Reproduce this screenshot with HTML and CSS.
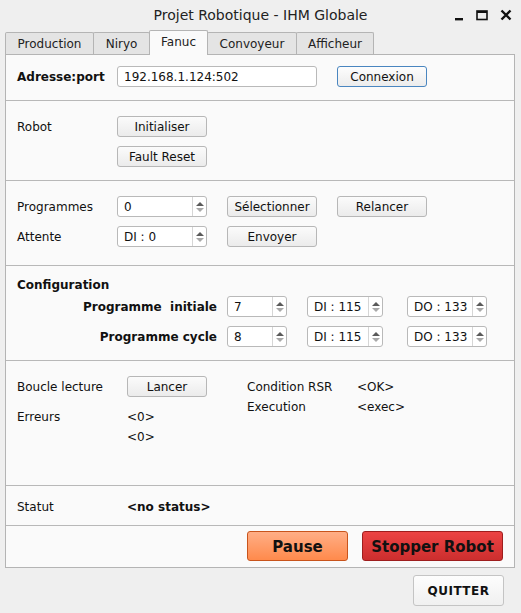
FILE: index.html
```html
<!DOCTYPE html>
<html lang="fr">
<head>
<meta charset="utf-8">
<title>Projet Robotique - IHM Globale</title>
<link rel="stylesheet" href="styles.css">
</head>
<body>
<div class="window">
  <div class="titlebar">
    <span class="title">Projet Robotique - IHM Globale</span>
    <div class="wm">
      <svg class="wm-min" width="10" height="10" viewBox="0 0 10 10"><rect x="1" y="7" width="8" height="2.4" fill="#111"/></svg>
      <svg class="wm-max" width="12" height="12" viewBox="0 0 12 12"><rect x="1" y="2" width="10" height="8.5" fill="none" stroke="#111" stroke-width="1.6"/><rect x="1" y="2" width="10" height="2" fill="#111"/></svg>
      <svg class="wm-close" width="12" height="12" viewBox="0 0 12 12"><path d="M1.5 1.5 L10.5 10.5 M10.5 1.5 L1.5 10.5" stroke="#111" stroke-width="2.4"/></svg>
    </div>
  </div>

  <div class="tabs">
    <div class="tab tab-production">Production</div>
    <div class="tab tab-niryo">Niryo</div>
    <div class="tab tab-fanuc active">Fanuc</div>
    <div class="tab tab-convoyeur">Convoyeur</div>
    <div class="tab tab-afficheur">Afficheur</div>
  </div>

  <div class="panel">
    <section class="sec sec-addr">
      <div class="row">
        <span class="label bold">Adresse:port</span>
        <div class="input w200">192.168.1.124:502</div>
        <button class="btn default w90">Connexion</button>
      </div>
    </section>

    <section class="sec sec-robot">
      <div class="row">
        <span class="label">Robot</span>
        <button class="btn w90">Initialiser</button>
      </div>
      <div class="row">
        <span class="label"></span>
        <button class="btn w90">Fault Reset</button>
      </div>
    </section>

    <section class="sec sec-prog">
      <div class="row">
        <span class="label">Programmes</span>
        <div class="spin w90"><span class="val">0</span><span class="arrows"><i class="up"></i><i class="down"></i></span></div>
        <button class="btn w90">Sélectionner</button>
        <button class="btn w90">Relancer</button>
      </div>
      <div class="row">
        <span class="label">Attente</span>
        <div class="spin w90"><span class="val">DI : 0</span><span class="arrows"><i class="up"></i><i class="down"></i></span></div>
        <button class="btn w90">Envoyer</button>
      </div>
    </section>

    <section class="sec sec-config">
      <div class="config-title bold">Configuration</div>
      <div class="crow">
        <span class="clabel bold">Programme&nbsp; initiale</span>
        <div class="spin w60"><span class="val">7</span><span class="arrows"><i class="up"></i><i class="down"></i></span></div>
        <div class="spin w76 ml20"><span class="val">DI : 115</span><span class="arrows"><i class="up"></i><i class="down"></i></span></div>
        <div class="spin w80 ml24"><span class="val">DO : 133</span><span class="arrows"><i class="up"></i><i class="down"></i></span></div>
      </div>
      <div class="crow">
        <span class="clabel bold">Programme cycle</span>
        <div class="spin w60"><span class="val">8</span><span class="arrows"><i class="up"></i><i class="down"></i></span></div>
        <div class="spin w76 ml20"><span class="val">DI : 115</span><span class="arrows"><i class="up"></i><i class="down"></i></span></div>
        <div class="spin w80 ml24"><span class="val">DO : 133</span><span class="arrows"><i class="up"></i><i class="down"></i></span></div>
      </div>
    </section>

    <section class="sec sec-loop">
      <div class="loop-left">
        <div class="row">
          <span class="label l110">Boucle lecture</span>
          <button class="btn w80">Lancer</button>
        </div>
        <div class="line"><span class="label l110">Erreurs</span><span>&lt;0&gt;</span></div>
        <div class="line"><span class="label l110"></span><span>&lt;0&gt;</span></div>
      </div>
      <div class="loop-right">
        <div class="line"><span class="label l110">Condition RSR</span><span>&lt;OK&gt;</span></div>
        <div class="line"><span class="label l110">Execution</span><span>&lt;exec&gt;</span></div>
      </div>
    </section>

    <section class="sec sec-status">
      <div class="line"><span class="label l110">Statut</span><span class="bold">&lt;no status&gt;</span></div>
    </section>

    <section class="sec sec-actions">
      <button class="big pause">Pause</button>
      <button class="big stop">Stopper Robot</button>
    </section>
  </div>

  <div class="footer">
    <button class="quit">QUITTER</button>
  </div>
</div>
</body>
</html>
```

FILE: styles.css
```css
* { box-sizing: border-box; }
html, body {
  margin: 0;
  padding: 0;
  background: #efefef;
  font-family: "DejaVu Sans", sans-serif;
  font-size: 12px;
  color: #111;
}
.window {
  width: 521px;
  height: 613px;
  background: #efefef;
  display: flex;
  flex-direction: column;
}
.bold { font-weight: bold; }

.titlebar {
  height: 30px;
  position: relative;
  display: flex;
  align-items: center;
  justify-content: center;
}
.title {
  font-size: 14px;
  color: #222;
}
.wm {
  position: absolute;
  right: 9px;
  top: 9px;
  display: flex;
  align-items: center;
  gap: 12px;
}
.wm-min { margin-top: 2px; }

.tabs {
  height: 24px;
  display: flex;
  align-items: flex-end;
  padding-left: 5px;
  position: relative;
  z-index: 2;
}
.tab {
  height: 22px;
  border: 1px solid #b4b4b4;
  border-bottom: none;
  background: #e4e4e4;
  display: flex;
  align-items: center;
  justify-content: center;
  margin-right: -1px;
  border-radius: 2px 2px 0 0;
  color: #222;
}
.tab.active {
  height: 25px;
  margin-bottom: -1px;
  background: #fafafa;
  padding-bottom: 3px;
}
.tab-production { width: 89px; }
.tab-niryo { width: 57px; }
.tab-fanuc { width: 59px; }
.tab-convoyeur { width: 90px; }
.tab-afficheur { width: 78px; }

.panel {
  margin-left: 5px;
  width: 510px;
  height: 514px;
  border: 1px solid #b4b4b4;
  background: #fafafa;
  display: flex;
  flex-direction: column;
}
.sec {
  border-bottom: 1px solid #b8b8b8;
  padding-left: 11px;
}
.sec:last-child { border-bottom: none; }

.row {
  display: flex;
  align-items: center;
  height: 21px;
  gap: 20px;
}
.row .label { width: 80px; }
.label { display: inline-block; }
.line {
  display: flex;
  align-items: center;
  height: 20px;
  padding-top: 2px;
}
.line .label.l110 { width: 110px; }

.input {
  height: 21px;
  border: 1px solid #b9b9b9;
  border-radius: 3px;
  background: #fff;
  padding-left: 6px;
  display: flex;
  align-items: center;
  font-size: 12px;
  color: #111;
}
.w200 { width: 200px; }
.w90 { width: 90px; }
.w80 { width: 80px; }
.w76 { width: 76px; }
.w60 { width: 60px; }
.ml20 { margin-left: 20px; }
.ml24 { margin-left: 24px; }

.btn {
  height: 21px;
  font-family: "DejaVu Sans", sans-serif;
  font-size: 12px;
  color: #111;
  border: 1px solid #b7b7b7;
  border-radius: 3px;
  background: linear-gradient(#fbfbfb, #ebebeb);
  padding: 0;
}
.btn.default {
  border-color: #4a86c0;
  background: linear-gradient(#fdfdfd, #ececec);
}

.spin {
  height: 21px;
  border: 1px solid #b9b9b9;
  border-radius: 3px;
  background: #fff;
  display: flex;
  align-items: stretch;
}
.spin .val {
  flex: 1;
  padding-left: 6px;
  display: flex;
  align-items: center;
}
.spin .arrows {
  width: 14px;
  border-left: 1px solid #d6d6d6;
  display: flex;
  flex-direction: column;
  align-items: center;
  justify-content: center;
  gap: 2px;
}
.arrows i {
  width: 0;
  height: 0;
  border-left: 4px solid transparent;
  border-right: 4px solid transparent;
}
.arrows .up { border-bottom: 4px solid #5a5a5a; }
.arrows .down { border-top: 4px solid #a8a8a8; }

.sec-addr { padding-top: 11px; padding-bottom: 13px; height: 46px; }
.sec-robot {
  padding-top: 15px;
  height: 80px;
  display: flex;
  flex-direction: column;
  gap: 9px;
}
.sec-prog {
  padding-top: 15px;
  height: 85px;
  display: flex;
  flex-direction: column;
  gap: 9px;
}
.sec-config {
  padding-top: 11px;
  height: 95px;
}
.config-title {
  height: 16px;
  display: flex;
  align-items: center;
  margin-bottom: 3px;
}
.crow {
  display: flex;
  align-items: center;
  height: 21px;
  margin-bottom: 9px;
}
.clabel {
  width: 210px;
  text-align: right;
  padding-right: 10px;
}
.sec-loop {
  height: 125px;
  padding-top: 15px;
  display: flex;
}
.loop-left { width: 230px; }
.loop-left .row { margin-bottom: 9px; }
.loop-left .row .label { width: 90px; }
.sec-status {
  height: 40px;
  padding-top: 10px;
}
.sec-actions {
  flex: 1;
  display: flex;
  justify-content: flex-end;
  align-items: flex-start;
  padding-top: 5px;
  padding-right: 11px;
  gap: 14px;
}
.big {
  height: 30px;
  font-family: "DejaVu Sans", sans-serif;
  font-size: 15px;
  font-weight: bold;
  color: #111;
  border-radius: 3px;
  padding: 2px 0 0 0;
}
.pause {
  width: 101px;
  border: 1px solid #c8541c;
  background: linear-gradient(#ffae86, #ff8a4c);
}
.stop {
  width: 141px;
  border: 1px solid #9e1e1e;
  background: linear-gradient(#ec4444, #cc2e2e);
}

.footer {
  flex: 1;
  display: flex;
  justify-content: flex-end;
  align-items: flex-start;
  padding-top: 7px;
  padding-right: 17px;
}
.quit {
  width: 91px;
  height: 31px;
  font-family: "DejaVu Sans", sans-serif;
  font-size: 12px;
  font-weight: bold;
  letter-spacing: 0.5px;
  color: #111;
  border: 1px solid #c4c4c4;
  border-radius: 3px;
  background: linear-gradient(#fdfdfd, #f0f0f0);
  padding: 0;
}
```
